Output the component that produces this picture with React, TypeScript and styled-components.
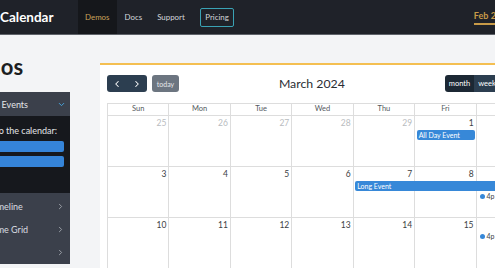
import React from 'react';
import styled, { createGlobalStyle } from 'styled-components';
import { ChevronDown, ChevronLeft, ChevronRight } from 'lucide-react';

const GlobalStyle = createGlobalStyle`
  html, body {
    margin: 0;
    padding: 0;
  }
  body {
    background: #f3f4f6;
    font-family: Lato, "Open Sans", sans-serif;
    overflow: hidden;
  }
  * {
    box-sizing: border-box;
  }
`;

const Page = styled.div`
  width: 495px;
  height: 268px;
  overflow: hidden;
  display: flex;
  flex-direction: column;
`;

const TopBar = styled.header`
  flex-shrink: 0;
  height: 35px;
  display: flex;
  align-items: stretch;
  background: #1f2229;
  border-bottom: 1px solid #5f636a;
`;

const Brand = styled.div`
  display: flex;
  align-items: center;
  font-size: 13.5px;
  font-weight: 700;
  color: #ffffff;
  white-space: nowrap;
`;

const Nav = styled.nav`
  display: flex;
  align-items: stretch;
  margin-left: 24px;
`;

const NavItem = styled.a<{ $active?: boolean }>`
  display: flex;
  align-items: center;
  padding: 0 7.5px;
  font-size: 7.9px;
  color: ${p => (p.$active ? '#c9a15a' : '#d3d6db')};
  background: ${p => (p.$active ? '#15171b' : 'transparent')};
  white-space: nowrap;
`;

const PricingBox = styled.span`
  padding: 3px 4.5px;
  border: 1.5px solid #3aa2b4;
  border-radius: 2px;
  line-height: 11px;
`;

const DateLink = styled.div`
  display: flex;
  align-items: center;
  margin-left: 232px;
  padding-top: 1px;
`;

const DateText = styled.span`
  font-size: 9px;
  font-weight: 700;
  color: #c89b48;
  padding-bottom: 2px;
  border-bottom: 2px solid #c89b48;
  white-space: nowrap;
`;

const Body = styled.div`
  display: flex;
  align-items: flex-start;
  flex: 1;
`;

const LeftCol = styled.aside`
  flex-shrink: 0;
  width: 140px;
  margin-left: -70px;
  padding-top: 19px;
`;

const PageTitle = styled.h1`
  margin: 0 0 12px;
  padding-left: 24px;
  font-size: 22px;
  line-height: 26px;
  font-weight: 700;
  color: #1c1e22;
  white-space: nowrap;
`;

const Panel = styled.div`
  background: #3b404b;
  color: #e3e5e8;
  font-size: 9px;
`;

const PanelHead = styled.div`
  height: 24px;
  display: flex;
  align-items: center;
  justify-content: space-between;
  padding: 0 4px 0 9px;
  white-space: nowrap;
`;

const DragArea = styled.div`
  height: 77px;
  background: #16181d;
  padding: 9px 6px 0 10px;
`;

const DragHint = styled.div`
  line-height: 12px;
  white-space: nowrap;
  margin-bottom: 4px;
`;

const DragChip = styled.div`
  height: 11px;
  margin-bottom: 4px;
  border-radius: 2px;
  background: #3584d9;
`;

const RowList = styled.div`
  padding-top: 2px;
`;

const PanelRow = styled.div`
  height: 23px;
  display: flex;
  align-items: center;
  justify-content: space-between;
  padding: 0 5px 0 21px;
  color: #dadde2;
  white-space: nowrap;
`;

const Card = styled.section`
  flex-shrink: 0;
  width: 445px;
  height: 300px;
  margin-left: 30px;
  margin-top: 28px;
  padding: 10px 8px 0 7px;
  background: #ffffff;
  border-top: 2px solid #f4bf52;
`;

const Toolbar = styled.div`
  height: 17px;
  display: flex;
  align-items: center;
  justify-content: space-between;
  margin-bottom: 11px;
`;

const Chunk = styled.div`
  display: flex;
  align-items: center;
`;

const BtnGroup = styled.div`
  display: flex;
  border-radius: 3px;
  overflow: hidden;
`;

const IconBtn = styled.button`
  width: 20px;
  height: 17px;
  padding: 0;
  border: none;
  display: flex;
  align-items: center;
  justify-content: center;
  background: #2c3e50;
  color: #ffffff;
`;

const TodayBtn = styled.button`
  width: 27px;
  height: 17px;
  margin-left: 5px;
  padding: 0;
  border: none;
  border-radius: 3px;
  background: #6c7580;
  color: #e6e8eb;
  font-family: inherit;
  font-size: 7px;
`;

const Title = styled.h2`
  margin: 0;
  font-size: 12.3px;
  font-weight: 400;
  color: #2b2e33;
  white-space: nowrap;
`;

const ViewBtn = styled.button<{ $active?: boolean }>`
  height: 17px;
  padding: 0 4px;
  border: none;
  background: ${p => (p.$active ? '#1c2834' : '#2c3e50')};
  color: #ffffff;
  font-family: inherit;
  font-size: 7.5px;
`;

const Table = styled.div`
  width: 431px;
  border-left: 1px solid #dddddd;
  border-top: 1px solid #dddddd;
`;

const HeadRow = styled.div`
  display: grid;
  grid-template-columns: repeat(7, 1fr);
  height: 11px;
`;

const HeadCell = styled.div`
  border-right: 1px solid #dddddd;
  text-align: center;
  font-size: 7.5px;
  line-height: 10px;
  color: #555a60;
`;

const WeekRow = styled.div`
  display: grid;
  grid-template-columns: repeat(7, 1fr);
  grid-template-rows: 13px auto auto 1fr;
  height: 51.2px;
  border-top: 1px solid #dddddd;
`;

const DayCell = styled.div<{ $col: number }>`
  grid-row: 1 / -1;
  grid-column: ${p => p.$col};
  border-right: 1px solid #dddddd;
`;

const DayNum = styled.div<{ $col: number; $muted?: boolean }>`
  grid-row: 1;
  grid-column: ${p => p.$col};
  padding: 2px 3px 0 0;
  text-align: right;
  font-size: 8.5px;
  line-height: 11px;
  color: ${p => (p.$muted ? '#b9bcc0' : '#3b3e43')};
`;

const BarEvent = styled.div<{ $col: number; $span: number }>`
  grid-row: 2;
  grid-column: ${p => p.$col} / span ${p => p.$span};
  height: 10px;
  margin: 1px 1.5px 0;
  padding-left: 2px;
  border-radius: 2px;
  background: #3788d8;
  color: #ffffff;
  font-size: 7px;
  line-height: 10px;
  white-space: nowrap;
  overflow: hidden;
`;

const DotEvent = styled.div<{ $col: number; $row: number }>`
  grid-row: ${p => p.$row};
  grid-column: ${p => p.$col};
  height: 10px;
  display: flex;
  align-items: center;
  gap: 2px;
  padding-left: 3px;
  font-size: 7px;
  color: #3b3e43;
  white-space: nowrap;
  overflow: hidden;
`;

const Dot = styled.span`
  width: 5px;
  height: 5px;
  border-radius: 50%;
  background: #3788d8;
  flex-shrink: 0;
`;

const dayNames = ['Sun', 'Mon', 'Tue', 'Wed', 'Thu', 'Fri', 'Sat'];

const weeks = [
  [25, 26, 27, 28, 29, 1, 2],
  [3, 4, 5, 6, 7, 8, 9],
  [10, 11, 12, 13, 14, 15, 16],
  [17, 18, 19, 20, 21, 22, 23],
];

const App = () => {
  return (
    <>
      <GlobalStyle />
      <Page>
        <TopBar>
          <Brand>Calendar</Brand>
          <Nav>
            <NavItem $active>Demos</NavItem>
            <NavItem>Docs</NavItem>
            <NavItem>Support</NavItem>
            <NavItem>
              <PricingBox>Pricing</PricingBox>
            </NavItem>
          </Nav>
          <DateLink>
            <DateText>Feb 20 – 22</DateText>
          </DateLink>
        </TopBar>

        <Body>
          <LeftCol>
            <PageTitle>Demos</PageTitle>
            <Panel>
              <PanelHead>
                Drag-and-Drop Events
                <ChevronDown size={9} color="#48a6e0" strokeWidth={2.5} />
              </PanelHead>
              <DragArea>
                <DragHint>Drag these onto the calendar:</DragHint>
                <DragChip />
                <DragChip />
              </DragArea>
              <RowList>
                <PanelRow>
                  Resource Timeline
                  <ChevronRight size={9} color="#9da2aa" strokeWidth={2.5} />
                </PanelRow>
                <PanelRow>
                  Resource Time Grid
                  <ChevronRight size={9} color="#9da2aa" strokeWidth={2.5} />
                </PanelRow>
                <PanelRow>
                  Scheduler
                  <ChevronRight size={9} color="#9da2aa" strokeWidth={2.5} />
                </PanelRow>
              </RowList>
            </Panel>
          </LeftCol>

          <Card>
            <Toolbar>
              <Chunk>
                <BtnGroup>
                  <IconBtn>
                    <ChevronLeft size={10} strokeWidth={2.5} />
                  </IconBtn>
                  <IconBtn>
                    <ChevronRight size={10} strokeWidth={2.5} />
                  </IconBtn>
                </BtnGroup>
                <TodayBtn>today</TodayBtn>
              </Chunk>
              <Title>March 2024</Title>
              <Chunk>
                <BtnGroup>
                  <ViewBtn $active>month</ViewBtn>
                  <ViewBtn>week</ViewBtn>
                  <ViewBtn>day</ViewBtn>
                  <ViewBtn>list</ViewBtn>
                </BtnGroup>
              </Chunk>
            </Toolbar>

            <Table>
              <HeadRow>
                {dayNames.map(d => (
                  <HeadCell key={d}>{d}</HeadCell>
                ))}
              </HeadRow>
              {weeks.map((week, w) => (
                <WeekRow key={w}>
                  {week.map((n, i) => (
                    <DayCell key={'c' + i} $col={i + 1} />
                  ))}
                  {week.map((n, i) => (
                    <DayNum key={'n' + i} $col={i + 1} $muted={w === 0 && n > 20}>
                      {n}
                    </DayNum>
                  ))}
                  {w === 0 && <BarEvent $col={6} $span={1}>All Day Event</BarEvent>}
                  {w === 1 && <BarEvent $col={5} $span={3}>Long Event</BarEvent>}
                  {w === 1 && (
                    <DotEvent $col={7} $row={3}>
                      <Dot />4p Repeating Event
                    </DotEvent>
                  )}
                  {w === 2 && (
                    <DotEvent $col={7} $row={2}>
                      <Dot />4p Repeating Event
                    </DotEvent>
                  )}
                </WeekRow>
              ))}
            </Table>
          </Card>
        </Body>
      </Page>
    </>
  );
};

export default App;
